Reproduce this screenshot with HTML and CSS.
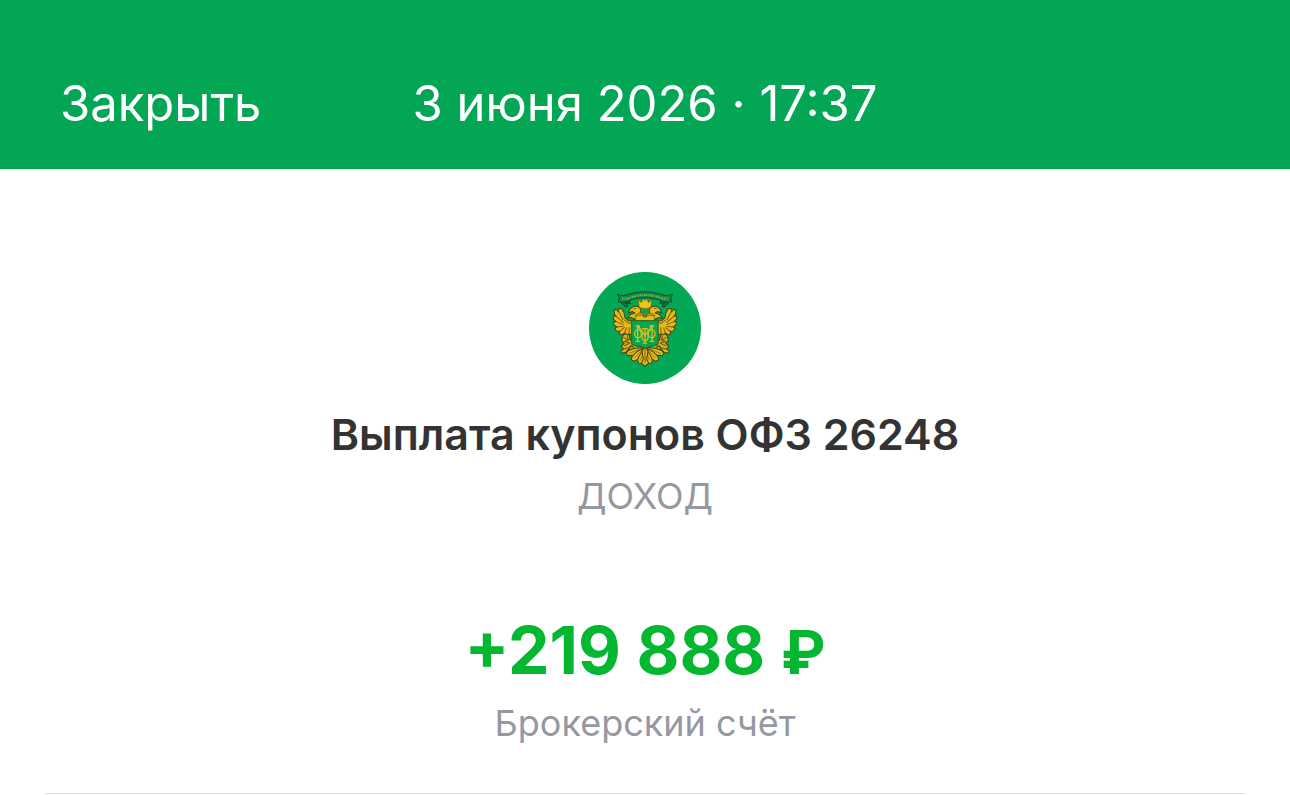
FILE: index.html
```
<!DOCTYPE html>
<html lang="ru">
<head>
  <meta charset="UTF-8">
  <meta name="viewport" content="width=device-width, initial-scale=1">
  <title>Выплата купонов</title>
  <link rel="stylesheet" href="styles.css">
</head>
<body>

<header class="header">
  <button type="button" class="close">Закрыть</button>
  <time class="date" datetime="2026-06-03T17:37">3 июня 2026 · 17:37</time>
</header>

<main class="operation">
  <svg class="logo" viewBox="13 12 334 334" role="img" aria-label="Герб">
    <defs>
      <!-- left half of the eagle, mirrored for the right one -->
      <g id="half" stroke-linejoin="round">
        <!-- wing -->
        <path fill="#e9b91b" stroke="#3c4713" stroke-width="3" d="M151 153 L140 158 130 157 120 148 117 132 110 121 102 121 101 131 94 123 88 126 89 138 95 145 87 142 85 151 93 160 86 160 87 169 96 176 90 180 95 188 105 189 103 197 112 199 119 194 124 202 133 197 144 199 144 164z"/>
        <path fill="none" stroke="#775e12" stroke-width="3" d="M102 131l13 24M95 145l21 18M93 160l23 9M96 176l20-2M105 189l14-12M119 194l6-16M132 197l1-20M118 155l14 10 11-3"/>
        <!-- head and neck -->
        <path fill="#e9b91b" stroke="#3c4713" stroke-width="3" d="M176 153 L151 153 140 148 128 150 136 139 150 134 142 130 131 134 135 123 146 114 158 114 167 122 166 133 176 140z"/>
        <path fill="none" stroke="#775e12" stroke-width="3" d="M145 122l8-2M150 143l18-11M159 148l9-9"/>
        <!-- paw -->
        <path fill="#dcae1c" stroke="#3c4713" stroke-width="3" d="M121 196l12 4 3 14 13 9-3 11-9-2-6 10-7 9-15 3-1-7 8-5-7-8 9-9-8-9 4-14z"/>
        <path fill="none" stroke="#6b5815" stroke-width="3" d="M116 207l15 8-12 4 16 5-17 8M127 201l4 14M113 243l17-5"/>
        <path fill="none" stroke="#d0a51c" stroke-width="5" d="M140 226l14 12 14 4M136 238l13 5"/>
        <!-- tail feathers -->
        <g fill="#e9b91b" stroke="#3c4713" stroke-width="3">
          <path d="M172 238q-24-1-42 8l-6 8 5 8 10-2 8 3 25-17z"/>
          <path d="M175 240q-22 8-34 25l-2 9 10 4 8-5 8 1 13-26z"/>
          <path d="M179 241q-16 15-21 34l3 9 9 1 9-11z"/>
        </g>
        <path fill="none" stroke="#775e12" stroke-width="2" d="M132 255l36-14M148 269l24-25M166 276l11-29"/>
        <!-- curls under the ribbon -->
        <path fill="#087f43" stroke="#164d2b" stroke-width="3" d="M104 91l7 15 13 11 6-5-8-8 15 3-8-12z"/>
        <path fill="none" stroke="#164d2b" stroke-width="3" d="M112 94l7 10M126 98l9 7"/>
      </g>
    </defs>
    <circle cx="180" cy="179" r="167" fill="#03a855"/>
    <use href="#half"/>
    <use href="#half" transform="translate(360 0) scale(-1 1)"/>
    <path fill="#e9b91b" stroke="#3c4713" stroke-width="3" d="M180 235l-9 13 4 24-6 12 11 9 11-9-6-12 4-24z"/>
    <path fill="none" stroke="#775e12" stroke-width="3" d="M180 243v40"/>
    <!-- crown -->
    <path fill="#f2c51b" stroke="#59600f" stroke-width="2" d="M163 118l-4-23 11 8 4-12 6 6 6-6 4 12 11-8-4 23q-17 7-34 0z"/>
    <path fill="#03a855" stroke="#7e8218" stroke-width="3" d="M169 123q11-5 22 0v10l-11 8-11-8z"/>
    <path fill="#e9b91b" stroke="#59600f" stroke-width="2" d="M152 144l15-3 13 6 13-6 15 3v13h-56z"/>
    <!-- shield -->
    <path fill="#03a855" stroke="#426717" stroke-width="4" d="M140 157h79v65q0 7-9 9-19 1-30 9-11-8-30-9-10-1-10-9z"/>
    <g fill="none" stroke="#d9bd20" stroke-width="4">
      <path d="M152 173h13M158 173v46M152 219h13M194 173h13M201 173v46M194 219h13M160 174l20 28 20-28M180 181v43M174 224h12M171 181h18"/>
      <ellipse cx="159" cy="196" rx="10" ry="12"/>
      <ellipse cx="200" cy="196" rx="10" ry="12"/>
      <path d="M171 184v24q0 8 9 9 9-1 9-9v-24"/>
    </g>
    <!-- ribbon -->
    <path fill="#079047" stroke="#174e2b" stroke-width="3" stroke-linejoin="round" d="M98 78q18 8 39-1 43-12 86 0 21 9 39 1l-6 12 4 11q-22 4-40-6-40-12-80 0-19 11-40 6l4-11z"/>
    <path fill="none" stroke="#9aad55" stroke-width="5" stroke-dasharray="4 2 2 3 5 2" d="M112 91q15 2 30-5 38-10 76 0 15 7 31 5"/>
  </svg>

  <h1 class="title">Выплата купонов ОФЗ 26248</h1>
  <p class="category">ДОХОД</p>
  <p class="amount">+219 888 <span class="currency">₽</span></p>
  <p class="account">Брокерский счёт</p>
</main>

</body>
</html>
```
FILE: styles.css
```
* {
  box-sizing: border-box;
}
body {
  margin: 0;
  background: #fff;
  font-family: Inter, "Liberation Sans", sans-serif;
  color: #333;
}
.header {
  display: grid;
  grid-template-columns: 1fr auto 1fr;
  align-items: baseline;
  padding: 74px 60px 35px;
  background: #03a655;
  color: #fff;
  font-size: 49px;
  line-height: 60px;
}
.close {
  justify-self: start;
  padding: 0;
  border: none;
  background: none;
  color: inherit;
  font: inherit;
  cursor: pointer;
}
.operation {
  display: flex;
  flex-direction: column;
  align-items: center;
  margin: 0 45px;
  padding-top: 103px;
  padding-bottom: 46px;
  border-bottom: 1px solid #dedede;
  text-align: center;
}
.logo {
  width: 112px;
  height: 112px;
}
.title {
  margin: 24px 0 0;
  font-size: 43px;
  font-weight: 600;
  line-height: 52px;
}
.category {
  margin: 12px 0 0;
  color: #9698a0;
  font-size: 36px;
  line-height: 48px;
}
.amount {
  margin: 90px 0 0;
  color: #03b830;
  font-size: 66px;
  font-weight: 700;
  line-height: 80px;
}
.currency {
  font-size: 60px;
  line-height: 1;
}
.account {
  margin: 9px 0 0;
  color: #9698a0;
  font-size: 36px;
  line-height: 48px;
}
```
